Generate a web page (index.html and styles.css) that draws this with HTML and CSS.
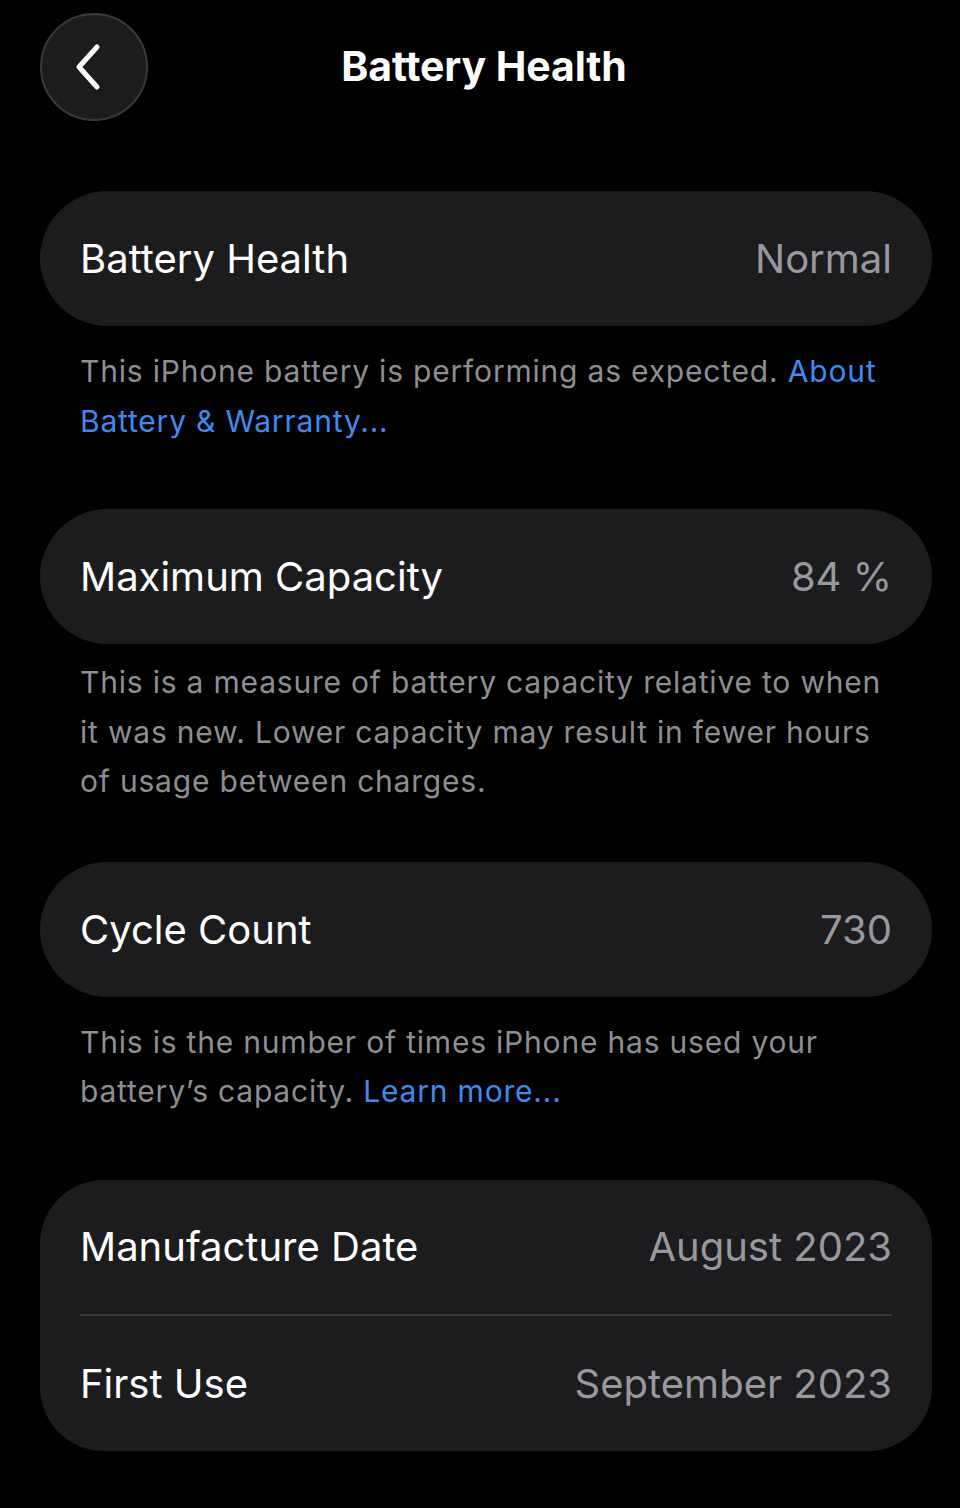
FILE: index.html
```html
<!DOCTYPE html>
<html lang="en">
<head>
  <meta charset="UTF-8">
  <meta name="viewport" content="width=device-width, initial-scale=1.0">
  <title>Battery Health</title>
  <link rel="stylesheet" href="styles.css">
</head>
<body>

  <div class="nav-bar">
    <button class="back-btn" aria-label="Back">
      <svg width="40" height="56" viewBox="0 0 40 56">
        <path d="M27 8 L9 28 L27 48" fill="none" stroke="#fff" stroke-width="5" stroke-linecap="round" stroke-linejoin="round"/>
      </svg>
    </button>
    <h1>Battery Health</h1>
  </div>

  <div class="content">
    <div class="section">
      <div class="card">
        <div class="row">
          <span class="label">Battery Health</span>
          <span class="value">Normal</span>
        </div>
      </div>
      <p class="note">This iPhone battery is performing as expected. <a href="#">About Battery &amp; Warranty...</a></p>
    </div>

    <div class="section">
      <div class="card">
        <div class="row">
          <span class="label">Maximum Capacity</span>
          <span class="value">84 %</span>
        </div>
      </div>
      <p class="note note-tight">This is a measure of battery capacity relative to when it was new. Lower capacity may result in fewer hours of usage between charges.</p>
    </div>

    <div class="section">
      <div class="card">
        <div class="row">
          <span class="label">Cycle Count</span>
          <span class="value">730</span>
        </div>
      </div>
      <p class="note">This is the number of times iPhone has used your battery’s capacity. <a href="#">Learn more...</a></p>
    </div>

    <div class="section">
      <div class="card card-group">
        <div class="row">
          <span class="label">Manufacture Date</span>
          <span class="value">August 2023</span>
        </div>
        <div class="row">
          <span class="label">First Use</span>
          <span class="value">September 2023</span>
        </div>
      </div>
    </div>
  </div>

</body>
</html>
```

FILE: styles.css
```css
/* General Styles */
body {
  margin: 0;
  padding: 0;
  background: #000;
  color: #fff;
  font-family: 'Inter', 'Roboto', sans-serif;
  height: 1508px;
  overflow: hidden;
}

.nav-bar {
  display: flex;
  align-items: center;
  height: 108px;
  padding: 13px 0 0 40px;
}

.back-btn {
  width: 108px;
  height: 108px;
  border-radius: 50%;
  background-color: #1c1c1e;
  border: 2px solid #3a3a3c;
  display: flex;
  align-items: center;
  justify-content: center;
  padding: 0 8px 0 0;
  cursor: pointer;
}

.nav-bar h1 {
  flex: 1;
  margin: 0;
  padding: 0 140px 2px 0;
  text-align: center;
  font-size: 41px;
  font-weight: 700;
  letter-spacing: -0.1px;
}

.content {
  margin: 70px 28px 0 40px;
}

.card {
  background-color: #1c1c1e;
  border-radius: 68px;
}

.row {
  display: flex;
  justify-content: space-between;
  align-items: center;
  height: 135px;
  padding: 0 40px;
  font-size: 40px;
}

.card-group {
  border-radius: 64px;
}

.card-group .row {
  margin: 0 40px;
  padding: 0;
  height: 134px;
}

.card-group .row + .row {
  height: 135px;
  border-top: 2px solid #38383a;
}

.value {
  color: #98989f;
}

.note {
  margin: 0 0 63px 0;
  padding: 21px 44px 0 40px;
  font-size: 30px;
  line-height: 49.5px;
  letter-spacing: 0.8px;
  color: #8e8e93;
}

.note-tight {
  padding-top: 14px;
  margin-bottom: 55px;
}

.note a {
  color: #3d8bf0;
  text-decoration: none;
}
```
